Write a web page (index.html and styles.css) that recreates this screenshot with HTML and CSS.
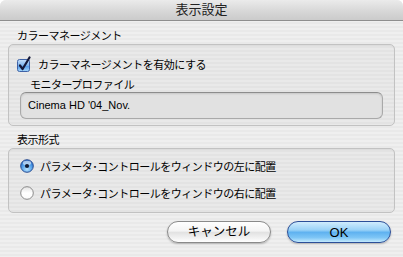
FILE: index.html
```html
<!DOCTYPE html>
<html>
<head>
    <title>表示設定</title>
    <link rel="stylesheet" href="styles.css">
</head>
<body>
    <div class="window">
        <div class="titlebar">表示設定</div>
        <div class="content">
            <div class="group-label">カラーマネージメント</div>
            <div class="group group-color">
                <label class="check-row">
                    <svg class="checkbox" width="16" height="16" viewBox="0 0 16 16">
                        <defs>
                            <linearGradient id="cbFill" x1="0" y1="0" x2="0" y2="1">
                                <stop offset="0" stop-color="#c8e0fa"/>
                                <stop offset="0.5" stop-color="#7eb4ee"/>
                                <stop offset="0.55" stop-color="#559bea"/>
                                <stop offset="1" stop-color="#a6d8fb"/>
                            </linearGradient>
                        </defs>
                        <rect x="1.5" y="3.5" width="12" height="12" rx="2" fill="url(#cbFill)" stroke="#3f62a6"/>
                        <path d="M4 9.5 L6.6 13 L13.5 1.5" fill="none" stroke="#15193a" stroke-width="2.2" stroke-linecap="round" stroke-linejoin="round"/>
                    </svg>
                    <span>カラーマネージメントを有効にする</span>
                </label>
                <div class="sub-label">モニタープロファイル</div>
                <div class="field">Cinema HD '04_Nov.</div>
            </div>

            <div class="group-label">表示形式</div>
            <div class="group group-mode">
                <label class="radio-row">
                    <svg class="radio" width="14" height="14" viewBox="0 0 14 14">
                        <defs>
                            <radialGradient id="rbFill" cx="0.5" cy="0.75" r="0.7">
                                <stop offset="0" stop-color="#b8e2fd"/>
                                <stop offset="0.6" stop-color="#4e9ee9"/>
                                <stop offset="1" stop-color="#2a6cc8"/>
                            </radialGradient>
                        </defs>
                        <circle cx="7" cy="7" r="6.3" fill="url(#rbFill)" stroke="#2e4f92"/>
                        <ellipse cx="7" cy="4" rx="4.2" ry="2.3" fill="#ffffff" opacity="0.55"/>
                        <circle cx="7" cy="7" r="2.1" fill="#111a33"/>
                    </svg>
                    <span>パラメータ･コントロールをウィンドウの左に配置</span>
                </label>
                <label class="radio-row">
                    <svg class="radio" width="14" height="14" viewBox="0 0 14 14">
                        <defs>
                            <linearGradient id="rbOff" x1="0" y1="0" x2="0" y2="1">
                                <stop offset="0" stop-color="#e2e2e2"/>
                                <stop offset="0.5" stop-color="#ffffff"/>
                                <stop offset="1" stop-color="#fafafa"/>
                            </linearGradient>
                        </defs>
                        <circle cx="7" cy="7" r="6.3" fill="url(#rbOff)" stroke="#8a8a8a"/>
                    </svg>
                    <span>パラメータ･コントロールをウィンドウの右に配置</span>
                </label>
            </div>

            <div class="buttons">
                <button class="btn btn-cancel">キャンセル</button>
                <button class="btn btn-ok">OK</button>
            </div>
        </div>
    </div>
</body>
</html>
```

FILE: styles.css
```css
* {
    box-sizing: border-box;
}

body {
    margin: 0;
    width: 403px;
    height: 257px;
    overflow: hidden;
    background: #ffffff;
    font-family: "Liberation Sans", "Noto Sans CJK JP", sans-serif;
    color: #000;
}

.window {
    height: 257px;
    border-radius: 6px 6px 0 0;
    overflow: hidden;
    background: repeating-linear-gradient(#efefef 0, #efefef 2px, #e9e9e9 2px, #e9e9e9 4px);
}

/* Title bar */
.titlebar {
    height: 21px;
    line-height: 20px;
    text-align: center;
    font-size: 13px;
    color: #222;
    background: linear-gradient(#ebebeb, #d6d6d6 60%, #cbcbcb);
    border-bottom: 1px solid #8e8e8e;
}

.content {
    padding: 8px 8px 0 8px;
}

.group-label {
    margin-left: 9px;
    font-size: 11px;
    letter-spacing: -0.5px;
    line-height: 14px;
    height: 14px;
    margin-bottom: 1px;
}

.group {
    border: 1px solid #c2c2c2;
    border-radius: 5px;
    background: rgba(0, 0, 0, 0.025);
    box-shadow: inset 0 1px 1px rgba(0, 0, 0, 0.06);
}

.group-color {
    height: 82px;
    padding: 11px 11px 0 11px;
    margin-bottom: 7px;
}

.group-mode {
    height: 65px;
    padding: 9px 11px 0 11px;
    display: flex;
    flex-direction: column;
    gap: 11px;
}

.check-row, .radio-row {
    display: flex;
    align-items: center;
    height: 16px;
    font-size: 11px;
    letter-spacing: -0.5px;
    gap: 6px;
}

.check-row {
    margin-left: -4px;
}

.checkbox, .radio {
    flex-shrink: 0;
}

.sub-label {
    margin: 6px 0 0 10px;
    font-size: 11px;
    letter-spacing: -0.5px;
    line-height: 14px;
    height: 14px;
}

.field {
    height: 27px;
    line-height: 25px;
    padding-left: 7px;
    font-size: 11px;
    background: #e1e1e1;
    border: 1px solid #a9a9a9;
    border-top-color: #8c8c8c;
    border-radius: 6px;
    box-shadow: inset 0 1px 2px rgba(0, 0, 0, 0.12);
}

/* Buttons */
.buttons {
    display: flex;
    justify-content: flex-end;
    gap: 16px;
    margin: 8px 4px 0 0;
}

.btn {
    width: 104px;
    height: 22px;
    border-radius: 11px;
    font-family: "Liberation Sans", "Noto Sans CJK JP", sans-serif;
    font-size: 12.5px;
    line-height: 19px;
    padding: 0;
    color: #000;
    box-shadow: 0 1px 2px rgba(0, 0, 0, 0.25);
}

.btn-cancel {
    border: 1px solid #8a8a8a;
    background: linear-gradient(#ffffff, #f4f4f4 45%, #e2e2e2 52%, #f2f2f2 80%, #ffffff);
}

.btn-ok {
    border: 1px solid #2c4f98;
    font-size: 13px;
    background: linear-gradient(#d0ecfd, #9ad2f7 40%, #5fb2f0 52%, #7ec6f6 78%, #c4eafd);
}
```
